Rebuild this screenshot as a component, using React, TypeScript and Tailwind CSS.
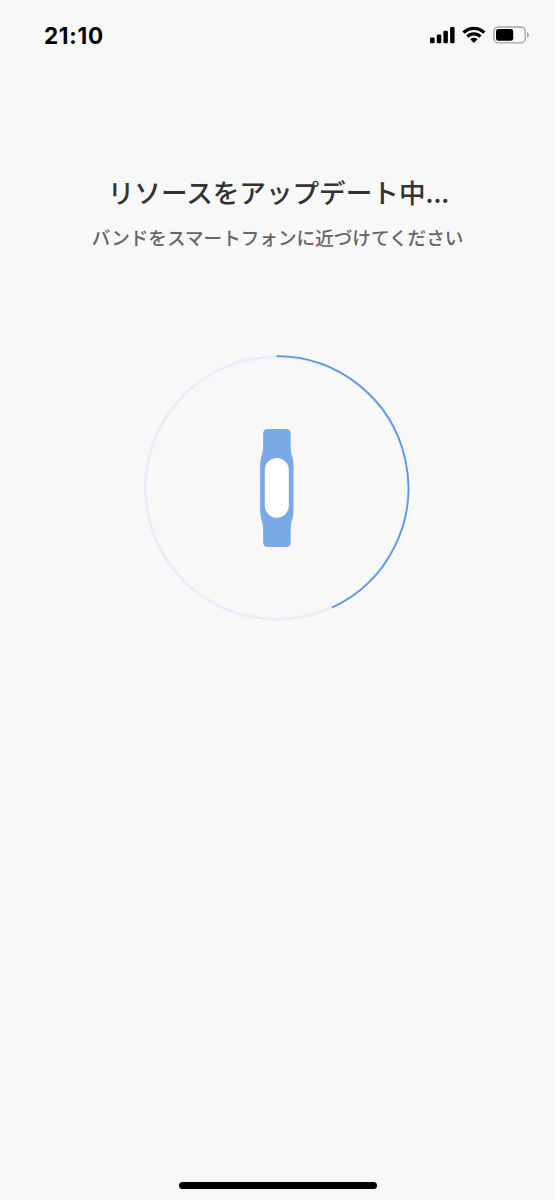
function StatusBar() {
  return (
    <header className="flex h-[70px] shrink-0 items-center justify-between pr-[26px] pl-[44px]">
      <time className="pt-px font-['Inter',sans-serif] text-[22.5px] leading-[28px] font-bold tracking-[0.7px] text-black">21:10</time>
      <div className="flex items-center">
        <svg width="25" height="18" viewBox="0 0 25 18" aria-label="Signal">
          <rect x="0" y="11.5" width="4.6" height="5.7" rx="1.3" />
          <rect x="6.8" y="8.5" width="4.5" height="8.7" rx="1.3" />
          <rect x="13.4" y="4.8" width="4.5" height="12.4" rx="1.3" />
          <rect x="20.1" y="1" width="4.5" height="16.2" rx="1.3" />
        </svg>
        <svg className="ml-[7px]" width="24" height="18" viewBox="0 0 24 18" aria-label="Wi-Fi">
          <g fill="none" stroke="#000" strokeWidth="3.3">
            <path d="M1.5 6.6 A14.7 14.7 0 0 1 22.3 6.6" />
            <path d="M5.4 10.6 A9.2 9.2 0 0 1 18.4 10.6" />
          </g>
          <path d="M8.3 13.3 A5.2 5.2 0 0 1 15.5 13.3 L12.4 16.5 Q11.9 17 11.4 16.5 Z" />
        </svg>
        <svg className="ml-[7px]" width="36" height="18" viewBox="0 0 36 18" aria-label="Battery">
          <rect x="0.9" y="1" width="31.3" height="15.9" rx="4.5" fill="none" stroke="#a4a4a4" strokeWidth="1.4" />
          <rect x="3" y="3.1" width="17.2" height="11.7" rx="2.4" />
          <path d="M34 6.1 Q36 7.2 36 9 T34 11.8 Z" fill="#a4a4a4" />
        </svg>
      </div>
    </header>
  );
}

function BandProgress() {
  return (
    <svg className="mt-[101px] mr-[1px]" width="270" height="270" viewBox="0 0 270 270" role="progressbar" aria-valuenow={43}>
      <circle cx="134.7" cy="135" r="131.3" fill="none" stroke="#e6eff9" strokeWidth="3" />
      <path d="M134.7 3.2 A131.8 131.8 0 0 1 190 254.6" fill="none" stroke="#5b97e4" strokeWidth="1.8" />
      <path
        d="M125.9 76 H143.9 Q148.7 76 148.7 80.8 V94 C148.7 101 151.5 105 151.5 112 V158 C151.5 165 148.7 169 148.7 176 V189.2 Q148.7 194 143.9 194 H125.9 Q121.1 194 121.1 189.2 V176 C121.1 169 118.1 165 118.1 158 V112 C118.1 105 121.1 101 121.1 94 V80.8 Q121.1 76 125.9 76 Z"
        fill="#7aaae6"
      />
      <rect x="122.8" y="105" width="24" height="59.7" rx="12" fill="#fff" />
    </svg>
  );
}

export default function App() {
  return (
    <div className="flex h-[1200px] w-[555px] flex-col bg-[#f8f8f8] font-['Noto_Sans_CJK_JP',sans-serif]">
      <StatusBar />
      <main className="flex flex-1 flex-col items-center pt-[102px]">
        <h1 className="pl-[2px] text-[26.6px] leading-[40px] font-medium whitespace-nowrap text-[#333]">リソースをアップデート中...</h1>
        <p className="mt-[10px] text-[18.6px] leading-[30px] font-medium whitespace-nowrap text-[#666]">
          バンドをスマートフォンに近づけてください
        </p>
        <BandProgress />
      </main>
      <footer className="flex justify-center pb-[11px]">
        <div className="h-[7px] w-[198px] rounded-full bg-black" />
      </footer>
    </div>
  );
}
